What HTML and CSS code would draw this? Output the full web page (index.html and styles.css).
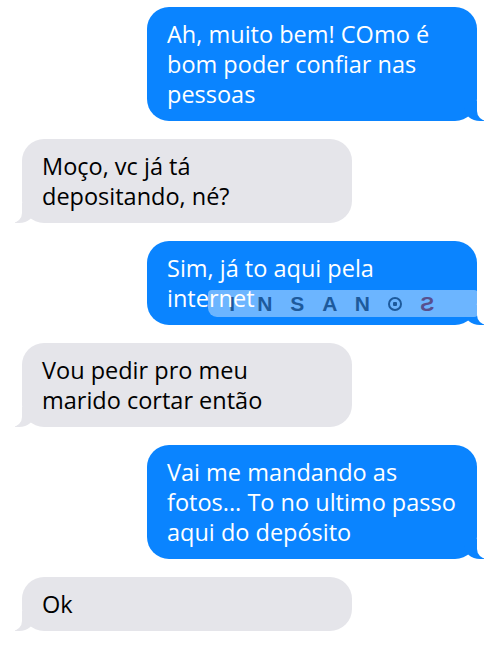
FILE: index.html
```html
<!DOCTYPE html>
<html lang="pt">
<head>
    <meta charset="UTF-8">
    <meta name="viewport" content="width=device-width, initial-scale=1.0">
    <title>Conversa</title>
    <link rel="stylesheet" href="styles.css">
</head>
<body>

    <div class="chat">
        <div class="bubble sent"><span class="text">Ah, muito bem! COmo é bom poder confiar nas pessoas</span></div>
        <div class="bubble received"><span class="text">Moço, vc já tá depositando, né?</span></div>
        <div class="bubble sent">
            <span class="text">Sim, já to aqui pela internet</span>
            <div class="watermark">
                <span>I</span><span>N</span><span>S</span><span>A</span><span>N</span><span><i class="target"></i></span><span class="flip">S</span>
            </div>
        </div>
        <div class="bubble received"><span class="text">Vou pedir pro meu marido cortar então</span></div>
        <div class="bubble sent"><span class="text">Vai me mandando as fotos... To no ultimo passo aqui do depósito</span></div>
        <div class="bubble received"><span class="text">Ok</span></div>
    </div>

</body>
</html>
```

FILE: styles.css
```css
/* Page */
body {
    margin: 0;
    background: #fff;
    font-family: "Open Sans", "Noto Sans", sans-serif;
}

.chat {
    display: flex;
    flex-direction: column;
    gap: 18px;
    padding: 7px 23px 0 22px;
}

/* Bubbles */
.bubble {
    position: relative;
    width: 330px;
    box-sizing: border-box;
    padding: 12px 14px 12px 20px;
    border-radius: 22px;
    font-size: 23.5px;
    line-height: 30px;
}

.bubble .text {
    position: relative;
    z-index: 2;
}

.sent {
    align-self: flex-end;
    background: #0a84ff;
    color: #fff;
}

.received {
    align-self: flex-start;
    background: #e5e5ea;
    color: #000;
    padding-right: 34px;
}

/* Tails */
.bubble::before,
.bubble::after {
    content: "";
    position: absolute;
    bottom: 0;
    height: 20px;
}

.sent::before {
    right: -7px;
    width: 20px;
    background: #0a84ff;
    border-bottom-left-radius: 16px 14px;
}

.sent::after {
    right: -26px;
    width: 26px;
    background: #fff;
    border-bottom-left-radius: 10px;
}

.received::before {
    left: -7px;
    width: 20px;
    background: #e5e5ea;
    border-bottom-right-radius: 16px 14px;
}

.received::after {
    left: -26px;
    width: 26px;
    background: #fff;
    border-bottom-right-radius: 10px;
}

/* Watermark */
.watermark {
    position: absolute;
    left: 61px;
    right: -1px;
    top: 49px;
    height: 27px;
    display: flex;
    align-items: center;
    padding-left: 8px;
    background: rgba(255, 255, 255, 0.4);
    border-radius: 4px 4px 4px 9px;
    font-family: "Liberation Sans", Arial, sans-serif;
    font-weight: bold;
    font-size: 21px;
    line-height: 1;
    color: #1d5a9c;
    z-index: 1;
}

.watermark span {
    width: 32.5px;
    text-align: center;
}

.watermark .target {
    display: inline-block;
    width: 10px;
    height: 10px;
    border: 2.5px solid #1d5a9c;
    border-radius: 50%;
    background: radial-gradient(circle, #1d5a9c 0 2px, transparent 2.5px);
}

.watermark .flip {
    transform: scaleX(-1);
    color: #58508e;
}
```
